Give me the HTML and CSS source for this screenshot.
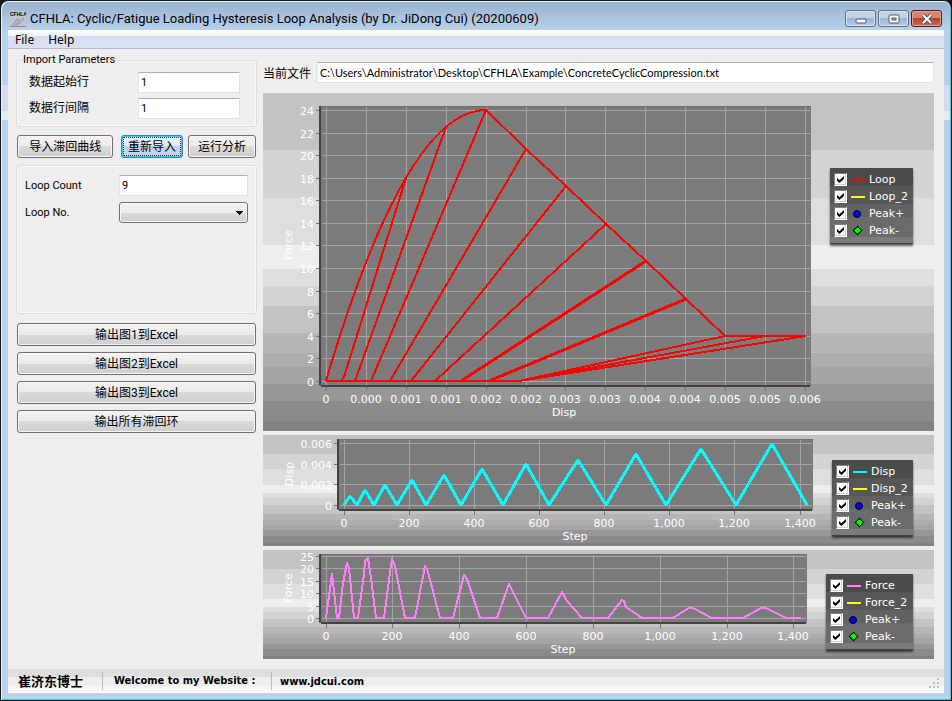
FILE: index.html
```html
<!DOCTYPE html>
<html lang="zh-CN">
<head>
  <meta charset="UTF-8">
  <meta name="viewport" content="width=device-width, initial-scale=1.0">
  <title>CFHLA: Cyclic/Fatigue Loading Hysteresis Loop Analysis</title>
  <link rel="stylesheet" href="styles.css">
</head>
<body>

<div class="window">
  <!-- Title bar -->
  <header class="titlebar">
    <svg class="app-icon" width="16" height="16" viewBox="0 0 16 16">
      <rect width="16" height="16" fill="#c3c7cb"/>
      <path d="M0 15.5h16" stroke="#8a8f94"/>
      <text x="0" y="5" class="app-icon-text">CFHLA</text>
      <path d="M2 14c3 0 3-6 6-6 2 0-1 6-4 6M6 14c4 0 4-7 8-7" fill="none" stroke="#a77fd0"/>
      <path d="M3 13c3-1 3-4 5-5M9 13c2-1 3-4 5-5" fill="none" stroke="#6cc58a"/>
    </svg>
    <h1>CFHLA: Cyclic/Fatigue Loading Hysteresis Loop Analysis (by Dr. JiDong Cui) (20200609)</h1>
    <div class="window-buttons">
      <button type="button" class="win-btn" aria-label="Minimize">
        <svg width="12" height="12" viewBox="0 0 12 12"><rect x="1" y="6" width="10" height="4" rx="1" fill="#fff" stroke="#535666"/></svg>
      </button>
      <button type="button" class="win-btn" aria-label="Maximize">
        <svg width="12" height="12" viewBox="0 0 12 12"><rect x="1" y="2" width="10" height="8" rx="1" fill="#fff" stroke="#535666"/><rect x="4" y="5" width="4" height="2" fill="#a9bfdc" stroke="#535666"/></svg>
      </button>
      <button type="button" class="win-btn close" aria-label="Close">
        <svg width="12" height="12" viewBox="0 0 12 12"><path d="M2 2l8 8M10 2l-8 8" stroke="#535666" stroke-width="4"/><path d="M2 2l8 8M10 2l-8 8" stroke="#fff" stroke-width="2"/></svg>
      </button>
    </div>
  </header>

  <div class="client">
    <nav class="menubar">
      <button type="button">File</button>
      <button type="button">Help</button>
    </nav>

    <main class="content">
      <!-- Left side -->
      <form class="sidebar">
        <fieldset class="group import-group">
          <legend>Import Parameters</legend>
          <div class="field">
            <label for="startRow">数据起始行</label>
            <input type="text" id="startRow" value="1">
          </div>
          <div class="field">
            <label for="rowStep">数据行间隔</label>
            <input type="text" id="rowStep" value="1">
          </div>
        </fieldset>

        <div class="actions">
          <button type="button" class="btn btn-import">导入滞回曲线</button>
          <button type="button" class="btn btn-focus">重新导入</button>
          <button type="button" class="btn btn-run">运行分析</button>
        </div>

        <div class="group loop-group">
          <div class="field">
            <label for="loopCount">Loop Count</label>
            <input type="text" id="loopCount" value="9">
          </div>
          <div class="field">
            <label for="loopNo">Loop No.</label>
            <select id="loopNo"><option></option></select>
          </div>
        </div>

        <div class="exports">
          <button type="button" class="btn">输出图1到Excel</button>
          <button type="button" class="btn">输出图2到Excel</button>
          <button type="button" class="btn">输出图3到Excel</button>
          <button type="button" class="btn">输出所有滞回环</button>
        </div>
      </form>

      <!-- Charts -->
      <div class="charts">
        <div class="file-row">
          <label for="currentFile">当前文件</label>
          <input type="text" id="currentFile" value="C:\Users\Administrator\Desktop\CFHLA\Example\ConcreteCyclicCompression.txt">
        </div>

        <section class="chart chart-loop">
          <svg viewBox="263 93 567 338" role="img" aria-label="Force against Disp">
            <rect x="319" y="106" width="492" height="280" class="plot"/>
            <path class="top-edge" d="M321 106h490v1h-490z"/>
            <path class="grid" d="M326 107V385M366 107V385M406 107V385M446 107V385M486 107V385M526 107V385M565 107V385M605 107V385M645 107V385M685 107V385M725 107V385M765 107V385M805 107V385M322 110H810M322 133H810M322 155H810M322 178H810M322 200H810M322 223H810M322 245H810M322 268H810M322 291H810M322 313H810M322 336H810M322 358H810M322 381H810"/>
            <path class="tick" d="M326 387V391M366 387V391M406 387V391M446 387V391M486 387V391M526 387V391M565 387V391M605 387V391M645 387V391M685 387V391M725 387V391M765 387V391M805 387V391M316 110H319M316 133H319M316 155H319M316 178H319M316 200H319M316 223H319M316 245H319M316 268H319M316 291H319M316 313H319M316 336H319M316 358H319M316 381H319"/>
            <path class="axis" d="M320 106V385M321 386H810"/>
            <g class="series loop">
              <path d="M326 381Q406 110 486 110L526 149L566 186L606 224L646 261L686 299L725 336H806"/>
              <path d="M326 381H519M341 381L344 377L406 178M355 381L446 127M371 381L486 110M390 381L526 149M411 381L566 186M435 381L606 224"/>
              <path class="wide" d="M461 381L646 261M489 381L686 299"/>
              <path d="M519 381L725 336M519 381L765 336M519 381L806 336"/>
            </g>
            <g class="y-labels">
              <text x="314" y="115">24</text><text x="314" y="138">22</text><text x="314" y="160">20</text>
              <text x="314" y="183">18</text><text x="314" y="205">16</text><text x="314" y="228">14</text>
              <text x="314" y="250">12</text><text x="314" y="273">10</text><text x="314" y="296">8</text>
              <text x="314" y="318">6</text><text x="314" y="341">4</text><text x="314" y="363">2</text>
              <text x="314" y="386">0</text>
            </g>
            <g class="x-labels">
              <text x="326" y="403">0</text><text x="366" y="403">0.000</text><text x="406" y="403">0.001</text>
              <text x="446" y="403">0.001</text><text x="486" y="403">0.002</text><text x="526" y="403">0.002</text>
              <text x="565" y="403">0.003</text><text x="605" y="403">0.003</text><text x="645" y="403">0.004</text>
              <text x="685" y="403">0.004</text><text x="725" y="403">0.005</text><text x="765" y="403">0.005</text>
              <text x="805" y="403">0.006</text>
              <text x="564" y="416">Disp</text>
              <text transform="translate(292 245) rotate(-90)">Force</text>
            </g>
          </svg>
          <div class="legend">
            <label><input type="checkbox" checked><i class="line red"></i>Loop</label>
            <label><input type="checkbox" checked><i class="line yellow"></i>Loop_2</label>
            <label><input type="checkbox" checked><i class="dot"></i>Peak+</label>
            <label><input type="checkbox" checked><i class="diamond"></i>Peak-</label>
          </div>
        </section>

        <section class="chart chart-disp">
          <svg viewBox="263 435 569 111" role="img" aria-label="Disp against Step">
            <rect x="337" y="439" width="476" height="71" class="plot"/>
            <path class="top-edge" d="M339 439h474v1h-474z"/>
            <path class="grid" d="M344 440V509M409 440V509M474 440V509M539 440V509M604 440V509M669 440V509M734 440V509M800 440V509M340 443H812M340 464H812M340 484H812M340 505H812"/>
            <path class="tick" d="M344 511V515M409 511V515M474 511V515M539 511V515M604 511V515M669 511V515M734 511V515M800 511V515M334 443H337M334 464H337M334 484H337M334 505H337"/>
            <path class="axis" d="M338 439V509M339 510H812"/>
            <path class="series disp" d="M344 505L350 496L357 505L365 490L374 505L385 485L397 505L412 480L426 505L444 475L461 505L482 469L503 505L526 464L549 505L578 460L606 505L636 454L666 505L701 449L736 505L772 444L807 505"/>
            <g class="y-labels">
              <text x="332" y="448">0.006</text><text x="332" y="469">0.004</text>
              <text x="332" y="489">0.002</text><text x="332" y="510">0</text>
            </g>
            <g class="x-labels">
              <text x="344" y="527">0</text><text x="409" y="527">200</text><text x="474" y="527">400</text>
              <text x="539" y="527">600</text><text x="604" y="527">800</text><text x="669" y="527">1,000</text>
              <text x="734" y="527">1,200</text><text x="800" y="527">1,400</text>
              <text x="575" y="540">Step</text>
              <text transform="translate(293 474) rotate(-90)">Disp</text>
            </g>
          </svg>
          <div class="legend">
            <label><input type="checkbox" checked><i class="line cyan"></i>Disp</label>
            <label><input type="checkbox" checked><i class="line yellow"></i>Disp_2</label>
            <label><input type="checkbox" checked><i class="dot"></i>Peak+</label>
            <label><input type="checkbox" checked><i class="diamond"></i>Peak-</label>
          </div>
        </section>

        <section class="chart chart-force">
          <svg viewBox="263 550 563 109" role="img" aria-label="Force against Step">
            <rect x="319" y="554" width="488" height="69" class="plot"/>
            <path class="top-edge" d="M321 554h486v1h-486z"/>
            <path class="grid" d="M326 555V622M392 555V622M459 555V622M526 555V622M593 555V622M660 555V622M727 555V622M793 555V622M322 556H806M322 568H806M322 581H806M322 593H806M322 606H806M322 618H806"/>
            <path class="tick" d="M326 624V628M392 624V628M459 624V628M526 624V628M593 624V628M660 624V628M727 624V628M793 624V628M316 556H319M316 568H319M316 581H319M316 593H319M316 606H319M316 618H319"/>
            <path class="axis" d="M320 554V622M321 623H806"/>
            <path class="series force" d="M326 618L332 574L337 618H339L343 583L347 563L349 568L354 618H358L364 574L365 561L368 558L371 578L376 618H384L389 580L392 559L395 566L405 618H415L425 566L428 572L440 618H453L464 575L467 579L480 618H497L509 584L526 618H548L562 592L567 601L582 618H608L622 600L624 601L626 607L642 618H673L689 608L693 608L712 618H743L761 608L766 608L786 618H801"/>
            <g class="y-labels">
              <text x="314" y="561">25</text><text x="314" y="573">20</text><text x="314" y="586">15</text>
              <text x="314" y="598">10</text><text x="314" y="611">5</text><text x="314" y="623">0</text>
            </g>
            <g class="x-labels">
              <text x="326" y="640">0</text><text x="392" y="640">200</text><text x="459" y="640">400</text>
              <text x="526" y="640">600</text><text x="593" y="640">800</text><text x="660" y="640">1,000</text>
              <text x="727" y="640">1,200</text><text x="793" y="640">1,400</text>
              <text x="563" y="653">Step</text>
              <text transform="translate(292 588) rotate(-90)">Force</text>
            </g>
          </svg>
          <div class="legend">
            <label><input type="checkbox" checked><i class="line pink"></i>Force</label>
            <label><input type="checkbox" checked><i class="line yellow"></i>Force_2</label>
            <label><input type="checkbox" checked><i class="dot"></i>Peak+</label>
            <label><input type="checkbox" checked><i class="diamond"></i>Peak-</label>
          </div>
        </section>
      </div>
    </main>

    <!-- Status bar -->
    <footer class="statusbar">
      <span class="author">崔济东博士</span>
      <span class="welcome">Welcome to my Website :</span>
      <a href="#">www.jdcui.com</a>
      <svg class="grip" width="12" height="12" viewBox="0 0 12 12"><path d="M8 0h2v2h-2zM4 4h2v2h-2zM8 4h2v2h-2zM0 8h2v2h-2zM4 8h2v2h-2zM8 8h2v2h-2z" fill="#bdbdbd"/></svg>
    </footer>
  </div>
</div>

</body>
</html>
```
FILE: styles.css
```css
* {
  box-sizing: border-box;
}

body {
  margin: 0;
  background: #15181c;
  color: #000;
  font-family: Roboto, "Noto Sans CJK SC", sans-serif;
  font-size: 11px;
}

button, input, select {
  font: inherit;
  color: inherit;
}

/* Window frame */
.window {
  min-height: 100vh;
  display: flex;
  flex-direction: column;
  padding: 0 7px 7px 6px;
  border: 1px solid #15181c;
  border-right-color: #000;
  border-radius: 8px 8px 0 0;
  box-shadow: inset 1px 1px 0 #e8f1fa, inset -1px -1px 0 #35cde6;
  background: linear-gradient(#b9d1ea 84px, #d3dbf0 84px, #d3dbf0 110px, #e3ebf5 110px, #e3ebf5 119px, #b9d1ea 119px);
}

.titlebar {
  display: flex;
  align-items: center;
  height: 28px;
  padding: 5px 2px 0 3px;
  margin: 1px -6px 0 -5px;
  border-radius: 7px 7px 0 0;
  background: linear-gradient(#98b2d0, #b9d1ea);
}

.app-icon {
  margin: 0 4px 0 5px;
}

.app-icon-text {
  font: bold 5px "Liberation Sans", sans-serif;
}

.titlebar h1 {
  flex: 1;
  margin: 0;
  font-size: 13px;
  font-weight: normal;
  line-height: 18px;
  white-space: nowrap;
}

.window-buttons {
  display: flex;
  gap: 2px;
  margin-right: 6px;
}

.win-btn {
  display: flex;
  align-items: center;
  justify-content: center;
  width: 31px;
  height: 17px;
  padding: 0;
  border: 1px solid #5e6f86;
  border-radius: 3px;
  box-shadow: inset 0 0 0 1px #d5e2f1;
  background: linear-gradient(#bfd2e8 50%, #9bb5d4 50%, #b5cce6);
}

.win-btn.close {
  border-color: #4c1a1c;
  box-shadow: inset 0 0 0 1px #e0a79b;
  background: linear-gradient(#d5826f 50%, #b5422c 50%, #cb6b50);
}

.client {
  flex: 1;
  display: flex;
  flex-direction: column;
  margin: 0 0 0 1px;
  background: #eee;
}

.menubar {
  display: flex;
  gap: 14px;
  height: 19px;
  padding: 0 7px;
  border-bottom: 1px solid #b3bccf;
  background: linear-gradient(#fff, #f1f2f6 6px, #d8def0 6px, #dbe0f2);
}

.menubar button {
  padding: 2px 0 0;
  border: 0;
  background: none;
  font-family: "Noto Sans", sans-serif;
  font-size: 12px;
  line-height: 16px;
}

/* Sidebar */
.content {
  flex: 1;
  display: flex;
  gap: 6px;
  padding: 0 10px 10px 8px;
}

.sidebar {
  flex: none;
  width: 241px;
  padding-top: 4px;
}

.group {
  margin: 0;
  border: 1px solid #dcdcdc;
  border-radius: 3px;
  box-shadow: inset 0 0 0 1px #f9f9f9;
}

.import-group {
  display: flex;
  flex-direction: column;
  gap: 5px;
  padding: 5px 16px 7px 12px;
}

.import-group legend {
  padding: 0;
  margin-left: -6px;
  line-height: 14px;
}

.field {
  display: flex;
  align-items: center;
  justify-content: space-between;
}

input[type="text"] {
  height: 21px;
  padding: 0 2px;
  border: 1px solid #e2e3ea;
  border-top-color: #abadb3;
  border-radius: 1px;
  background: #fff;
}

.import-group label,
.file-row label {
  font-family: "Noto Sans CJK SC", sans-serif;
  font-size: 12px;
}

.import-group label {
  padding-bottom: 3px;
  line-height: 18px;
}

.import-group input {
  width: 102px;
}

.btn {
  height: 23px;
  padding: 1px 0 0;
  border: 1px solid #707070;
  border-radius: 3px;
  box-shadow: inset 0 0 0 1px #f6f6f6;
  background: linear-gradient(#f2f2f2, #ebebeb 50%, #dadada 50%, #cfcfcf);
  font-size: 12px;
  line-height: 20px;
  white-space: nowrap;
}

.actions {
  display: flex;
  margin: 8px 1px 7px;
}

.btn-import {
  flex: 97;
}

.btn-focus {
  flex: 61;
  margin: 0 5px 0 8px;
  border-color: #3c7fb1;
  box-shadow: inset 0 0 0 1px #35cdf0;
  background: linear-gradient(#e9f3fa, #dceaf5 50%, #bfd2ec 50%, #c3d6ef);
  outline: 1px dotted #333;
  outline-offset: -3px;
}

.btn-run {
  flex: 68;
}

.loop-group {
  display: flex;
  flex-direction: column;
  gap: 6px;
  min-height: 149px;
  padding: 9px 8px;
}

.loop-group input,
.loop-group select {
  width: 129px;
}

.loop-group select {
  appearance: none;
  height: 21px;
  border: 1px solid #707070;
  border-radius: 3px;
  box-shadow: inset 0 0 0 1px #f6f6f6;
  background:
    conic-gradient(from -45deg at 50% 100%, #000 90deg, transparent 0) right 4px center / 7px 4px no-repeat,
    linear-gradient(#f2f2f2, #ebebeb 50%, #dadada 50%, #cfcfcf);
}

.exports {
  display: flex;
  flex-direction: column;
  gap: 6px;
  margin: 9px 1px 0;
}

/* Charts */
.charts {
  flex: 1;
  min-width: 0;
  display: flex;
  flex-direction: column;
  gap: 4px;
  padding-top: 13px;
}

.file-row {
  display: flex;
  align-items: center;
  gap: 6px;
  margin-bottom: 6px;
}

.file-row input {
  flex: 1;
  min-width: 0;
  font-family: Lato, sans-serif;
}

.chart {
  display: flex;
  align-items: flex-start;
  padding-right: 21px;
  background: linear-gradient(
    #c3c3c3 17%, #d4d4d4 17%, #d4d4d4 31%, #dedede 31%, #dedede 45%,
    #eee 45%, #eee 52%, #dedede 52%, #dedede 57%, #d3d3d3 57%, #d3d3d3 63%,
    #c3c3c3 63%, #c3c3c3 71%, #b6b6b6 71%, #b6b6b6 77%, #adadad 77%, #adadad 81%,
    #a5a5a5 81%, #a5a5a5 86%, #979797 86%, #979797 91%, #8b8b8b 91%, #8b8b8b 97%, #828282 97%);
}

.chart > svg {
  display: block;
  flex: 1;
  min-width: 0;
  font-family: "DejaVu Sans", sans-serif;
  font-size: 11px;
  fill: #fff;
}

.plot {
  fill: #7b7b7b;
}

.top-edge {
  fill: #6f6f6f;
}

.grid, .tick, .axis {
  fill: none;
  shape-rendering: crispEdges;
}

.grid {
  stroke: #a5a5a5;
}

.tick {
  stroke: #747474;
}

.axis {
  stroke: #434343;
  stroke-width: 2;
}

.series {
  fill: none;
  stroke-width: 2;
  stroke-linejoin: round;
  shape-rendering: crispEdges;
}

.loop { stroke: #f00; }
.disp { stroke: #0ff; stroke-width: 3; }
.force { stroke: #ff80ff; }

.wide {
  stroke-width: 3;
}

.y-labels {
  text-anchor: end;
}

.x-labels {
  text-anchor: middle;
}

.legend {
  flex: none;
  width: 83px;
  margin-top: 75px;
  padding: 3px 0 4px 4px;
  border-bottom: 1px solid #404040;
  box-shadow: 0 2px 2px rgba(0, 0, 0, 0.6);
  background: linear-gradient(#4b4b4b 24%, #575757 24%, #575757 48%, #626262 48%, #626262 65%, #6b6b6b 65%, #6b6b6b 92%, #7b7b7b 92%);
  color: #fff;
  font-family: "DejaVu Sans", sans-serif;
}

.chart-disp .legend {
  width: 81px;
  margin-top: 25px;
}

.chart-force .legend {
  width: 87px;
  margin-top: 24px;
}

.legend label {
  display: flex;
  align-items: center;
  height: 17px;
  white-space: nowrap;
}

.legend input {
  appearance: none;
  width: 13px;
  height: 13px;
  margin: 0 4px 0 0;
  border: 1px solid;
  border-color: #808080 #fff #fff #808080;
  box-shadow: inset -1px -1px 0 #d4d0c8;
  background: #fff;
}

.legend input:checked::before {
  content: "";
  display: block;
  width: 7px;
  height: 7px;
  margin: 2px;
  background: #000;
  clip-path: polygon(0 30%, 35% 62%, 100% 0, 100% 38%, 35% 100%, 0 68%);
}

.line {
  width: 14px;
  height: 2px;
  margin-right: 4px;
}

.red { background: #f00; }
.yellow { background: #ff0; }
.cyan { background: #0ff; }
.pink { background: #ff80ff; }

.dot, .diamond {
  width: 8px;
  height: 8px;
  margin: 0 8px 0 2px;
  border: 1px solid #000;
}

.dot {
  border-radius: 50%;
  background: #00f;
}

.diamond {
  width: 7px;
  height: 7px;
  margin: 0 8px 0 3px;
  background: #0f0;
  transform: rotate(45deg);
}

/* Status bar */
.statusbar {
  display: flex;
  align-items: center;
  height: 24px;
  padding-left: 10px;
  background: linear-gradient(#dedede 8px, #eee 8px, #eee 17px, #f6f6f6 17px, #f6f6f6 22px, #fff 22px);
  font-family: "DejaVu Sans Condensed", "Noto Sans CJK SC", sans-serif;
  font-weight: bold;
}

.author {
  width: 85px;
  border-right: 1px solid #bdbdbd;
  font-family: "Noto Sans CJK SC", sans-serif;
  font-size: 13px;
  line-height: 18px;
}

.welcome {
  width: 169px;
  padding-left: 11px;
  border-right: 1px solid #bdbdbd;
  line-height: 18px;
}

.statusbar a {
  margin-left: 8px;
  color: #000;
  text-decoration: none;
}

.grip {
  margin: 6px 3px 0 auto;
}
```
